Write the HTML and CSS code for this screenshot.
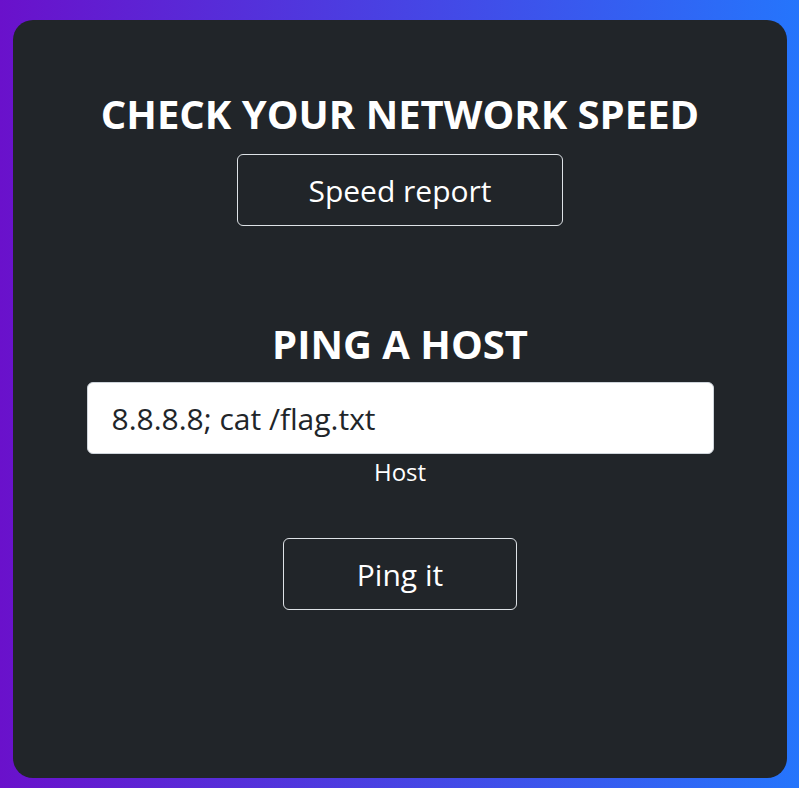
FILE: index.html
```html
<!DOCTYPE html>
<html lang="en">
<head>
<meta charset="utf-8">
<title>Network tools</title>
<link rel="stylesheet" href="styles.css">
</head>
<body>
<main class="card">
  <section class="block speed">
    <h1 class="title">CHECK YOUR NETWORK SPEED</h1>
    <button class="btn btn-speed" type="button">Speed report</button>
  </section>
  <form class="block ping" onsubmit="return false">
    <h1 class="title">PING A HOST</h1>
    <input class="host-input" type="text" value="8.8.8.8; cat /flag.txt">
    <label class="host-label">Host</label>
    <button class="btn btn-ping" type="submit">Ping it</button>
  </form>
</main>
</body>
</html>
```
FILE: styles.css
```css
html, body {
  margin: 0;
  height: 100%;
}
body {
  box-sizing: border-box;
  padding: 20px 12px 10px 13px;
  background: linear-gradient(to right, #6a11cb 0%, #2575fc 100%);
  font-family: "Open Sans", "Noto Sans", sans-serif;
  color: #fff;
}
.card {
  height: 100%;
  box-sizing: border-box;
  background: #212529;
  border-radius: 20px;
  display: flex;
  flex-direction: column;
  align-items: center;
  padding-top: 70px;
}
.block {
  display: flex;
  flex-direction: column;
  align-items: center;
  width: 100%;
}
.title {
  margin: 0;
  font-size: 40px;
  font-weight: 700;
  line-height: 48px;
}
.btn {
  box-sizing: border-box;
  background: transparent;
  color: #fff;
  border: 1px solid #dee2e6;
  border-radius: 6px;
  font-family: inherit;
  font-size: 30px;
  height: 72px;
  padding: 0;
  cursor: pointer;
}
.btn-speed {
  width: 326px;
  margin-top: 16px;
}
.ping {
  margin-top: 94px;
}
.host-input {
  box-sizing: border-box;
  width: 627px;
  height: 72px;
  margin-top: 14px;
  padding: 0 24px;
  border: 1px solid #ced4da;
  border-radius: 6px;
  background: #fff;
  color: #212529;
  font-family: inherit;
  font-size: 30px;
}
.host-label {
  margin-top: 0;
  font-size: 24px;
  line-height: 36px;
}
.btn-ping {
  width: 234px;
  margin-top: 48px;
}
```
